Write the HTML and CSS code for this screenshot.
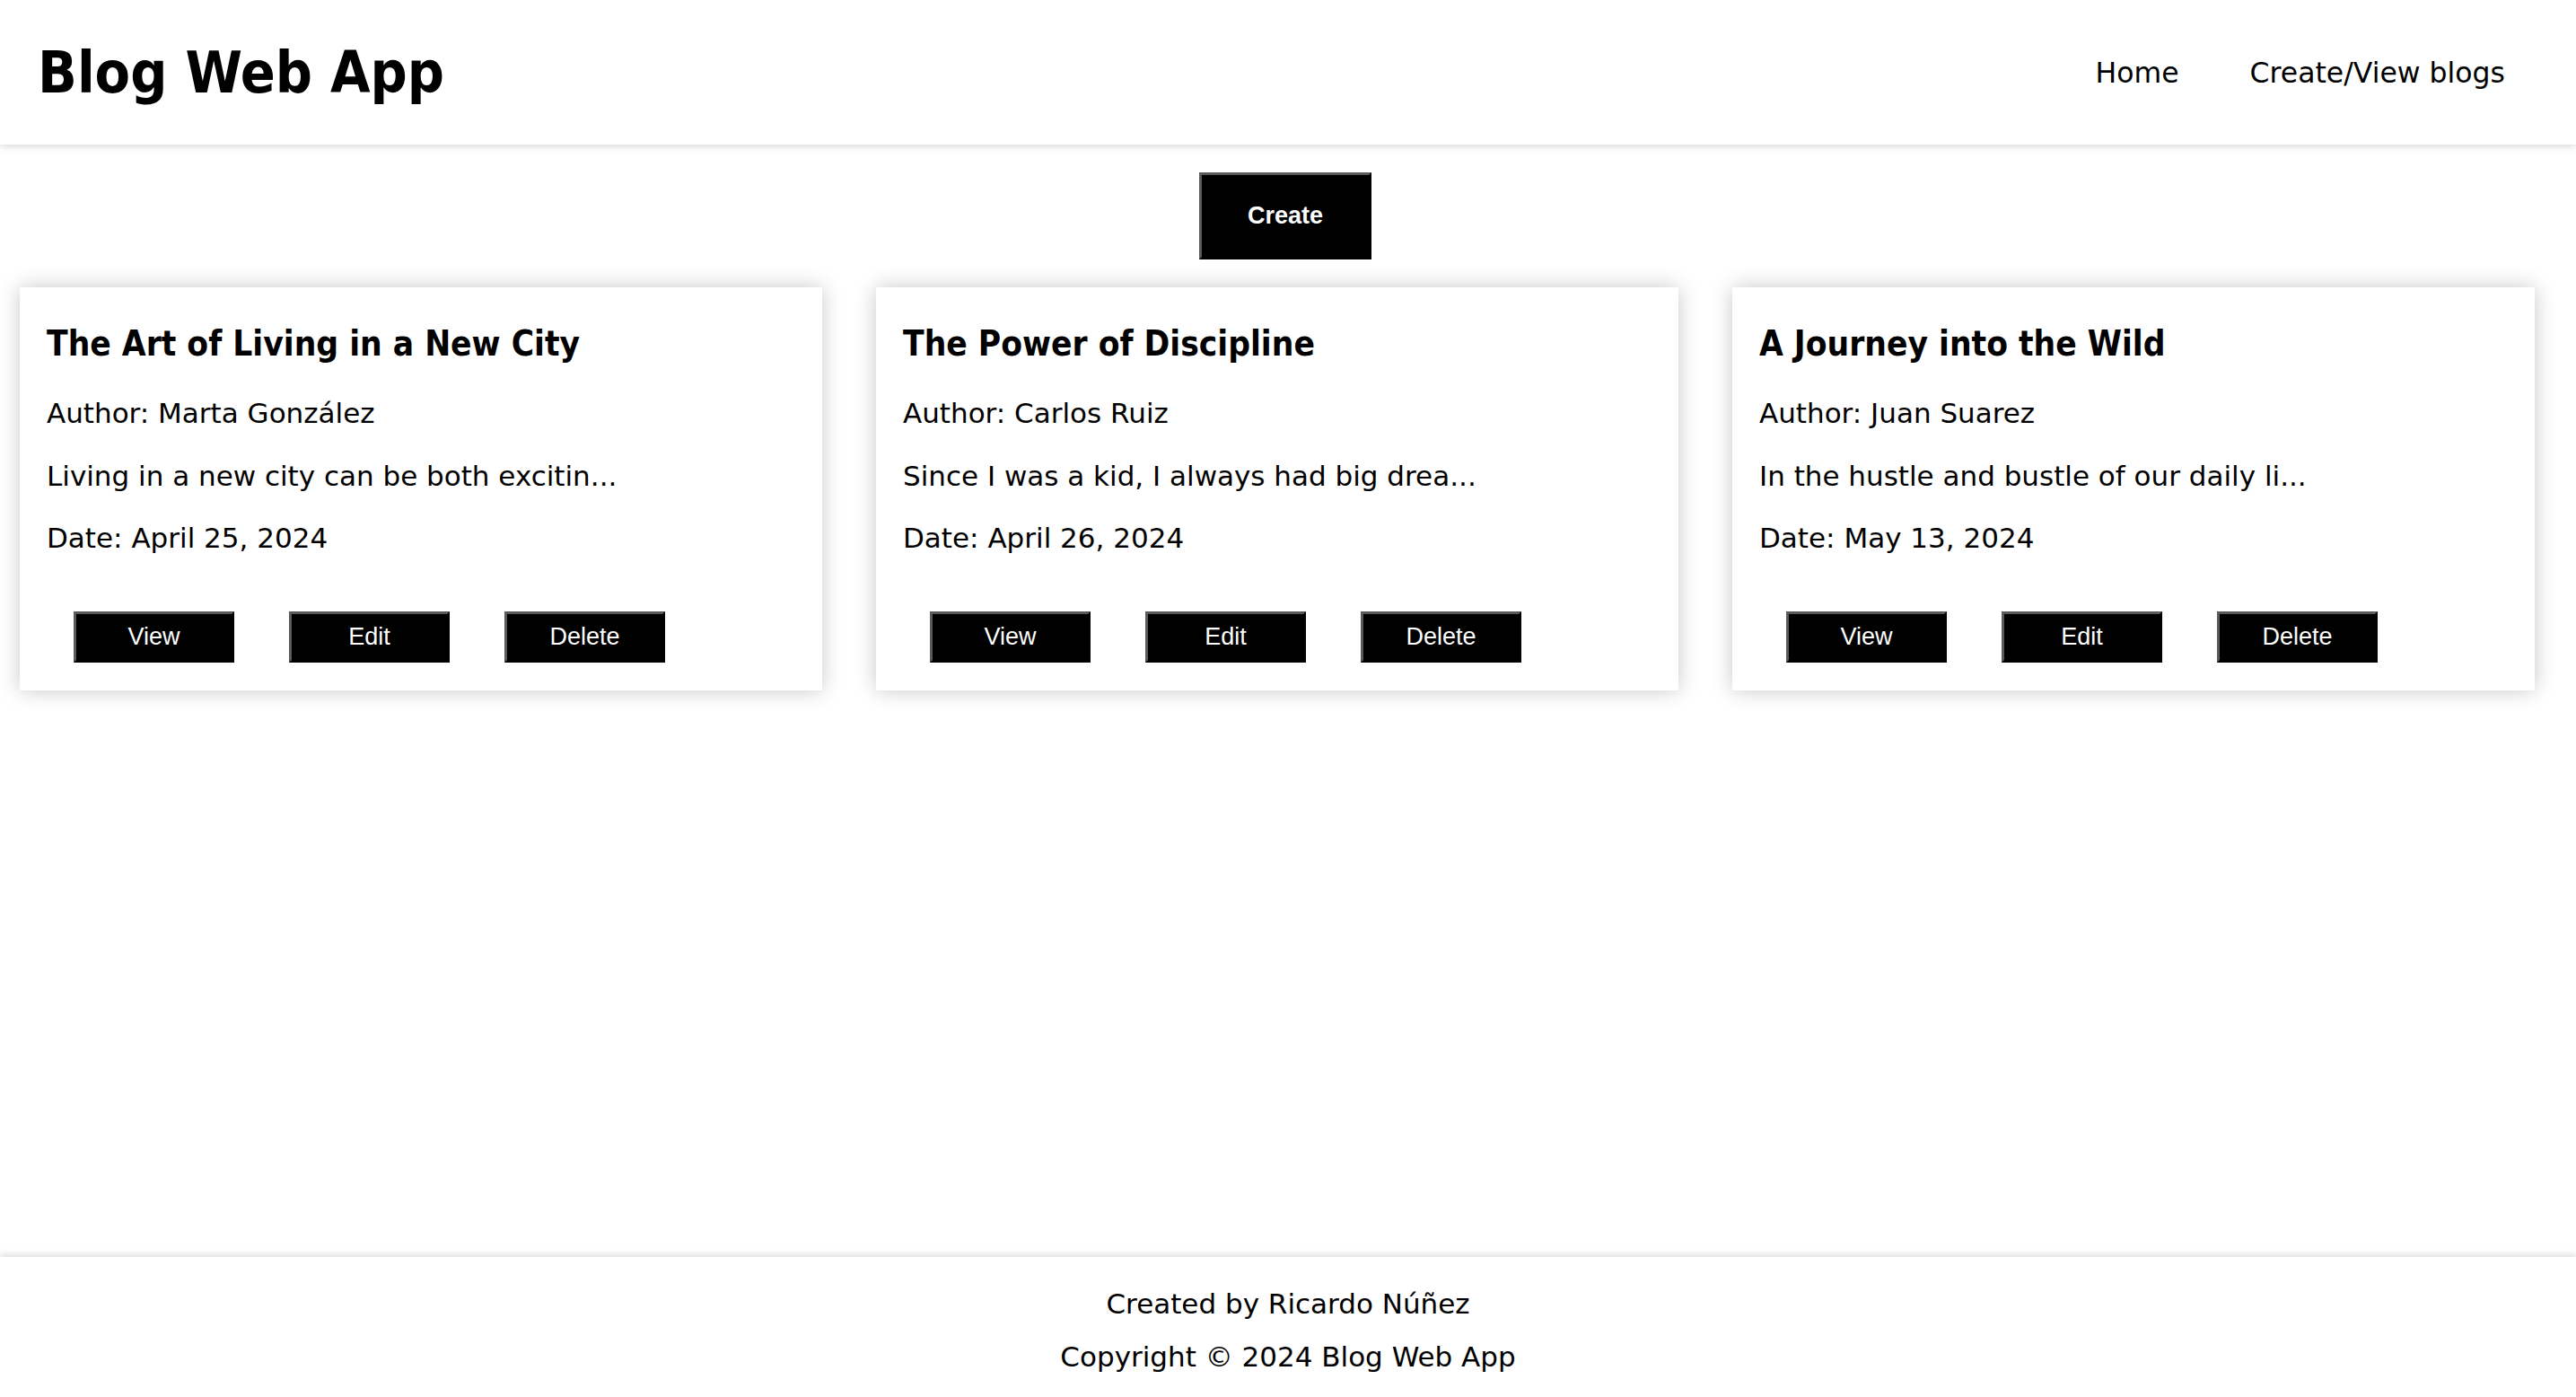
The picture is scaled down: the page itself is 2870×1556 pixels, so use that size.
FILE: index.html
```html
<!DOCTYPE html>
<html lang="en">
<head>
<meta charset="utf-8">
<title>Blog Web App</title>
<link rel="stylesheet" href="styles.css">
</head>
<body>
<header class="site-header">
  <h1 class="brand">Blog Web App</h1>
  <nav class="nav">
    <a class="nav-link" href="#">Home</a>
    <a class="nav-link" href="#">Create/View blogs</a>
  </nav>
</header>
<main class="main">
  <div class="create-wrap">
    <button class="btn btn-create">Create</button>
  </div>
  <section class="cards">
    <article class="card">
      <h3 class="card-title">The Art of Living in a New City</h3>
      <p class="card-text">Author: Marta González</p>
      <p class="card-text">Living in a new city can be both excitin...</p>
      <p class="card-text">Date: April 25, 2024</p>
      <div class="card-actions">
        <button class="btn btn-small">View</button>
        <button class="btn btn-small">Edit</button>
        <button class="btn btn-small">Delete</button>
      </div>
    </article>
    <article class="card">
      <h3 class="card-title">The Power of Discipline</h3>
      <p class="card-text">Author: Carlos Ruiz</p>
      <p class="card-text">Since I was a kid, I always had big drea...</p>
      <p class="card-text">Date: April 26, 2024</p>
      <div class="card-actions">
        <button class="btn btn-small">View</button>
        <button class="btn btn-small">Edit</button>
        <button class="btn btn-small">Delete</button>
      </div>
    </article>
    <article class="card">
      <h3 class="card-title">A Journey into the Wild</h3>
      <p class="card-text">Author: Juan Suarez</p>
      <p class="card-text">In the hustle and bustle of our daily li...</p>
      <p class="card-text">Date: May 13, 2024</p>
      <div class="card-actions">
        <button class="btn btn-small">View</button>
        <button class="btn btn-small">Edit</button>
        <button class="btn btn-small">Delete</button>
      </div>
    </article>
  </section>
</main>
<footer class="site-footer">
  <p class="footer-line">Created by Ricardo Núñez</p>
  <p class="footer-line">Copyright © 2024 Blog Web App</p>
</footer>
</body>
</html>
```
FILE: styles.css
```css
html, body {
  margin: 0;
  padding: 0;
  background: #fff;
}

body {
  font-family: "DejaVu Sans", "Liberation Sans", sans-serif;
  color: #000;
  min-height: 100vh;
  display: flex;
  flex-direction: column;
}

.site-header {
  height: 161px;
  display: flex;
  align-items: center;
  justify-content: space-between;
  padding: 0 79px 0 42px;
  box-shadow: 0 2px 8px rgba(0, 0, 0, 0.16);
  position: relative;
  z-index: 1;
  background: #fff;
}

.brand {
  margin: 0;
  font-size: 64px;
  font-weight: bold;
  font-stretch: condensed;
  line-height: 1;
}

.nav {
  display: flex;
  gap: 79px;
}

.nav-link {
  color: #000;
  text-decoration: none;
  font-size: 31.5px;
}

.main {
  flex: 1;
}

.create-wrap {
  display: flex;
  justify-content: center;
  padding: 31px 6px 0 0;
}

.btn {
  font-family: "Liberation Sans", Arial, sans-serif;
  background: #000;
  color: #fff;
  border: 3px solid;
  border-color: #5a5a5a #000 #000 #5a5a5a;
  padding: 0;
  cursor: pointer;
}

.btn-create {
  width: 192px;
  height: 97px;
  font-size: 27px;
  font-weight: bold;
}

.cards {
  display: flex;
  gap: 60px;
  padding: 31px 0 0 22px;
}

.card {
  width: 894px;
  box-sizing: border-box;
  padding: 30px 30px 31px;
  background: #fff;
  box-shadow: 0 0 22px rgba(0, 0, 0, 0.22);
}

.card-title {
  margin: 12px 0 38px;
  font-size: 38.5px;
  font-weight: bold;
  font-stretch: condensed;
  line-height: 42px;
}

.card-text {
  margin: 32.5px 0;
  font-size: 31px;
  line-height: 37px;
}

.card-actions {
  display: flex;
  gap: 61px;
  margin-top: 63px;
  padding-left: 30px;
}

.btn-small {
  width: 179px;
  height: 57px;
  font-size: 27px;
}

.site-footer {
  padding: 12px 0 4px;
  text-align: center;
  box-shadow: 0 -2px 8px rgba(0, 0, 0, 0.16);
  background: #fff;
}

.footer-line {
  margin: 22px 0;
  font-size: 31px;
  line-height: 37px;
}
```
